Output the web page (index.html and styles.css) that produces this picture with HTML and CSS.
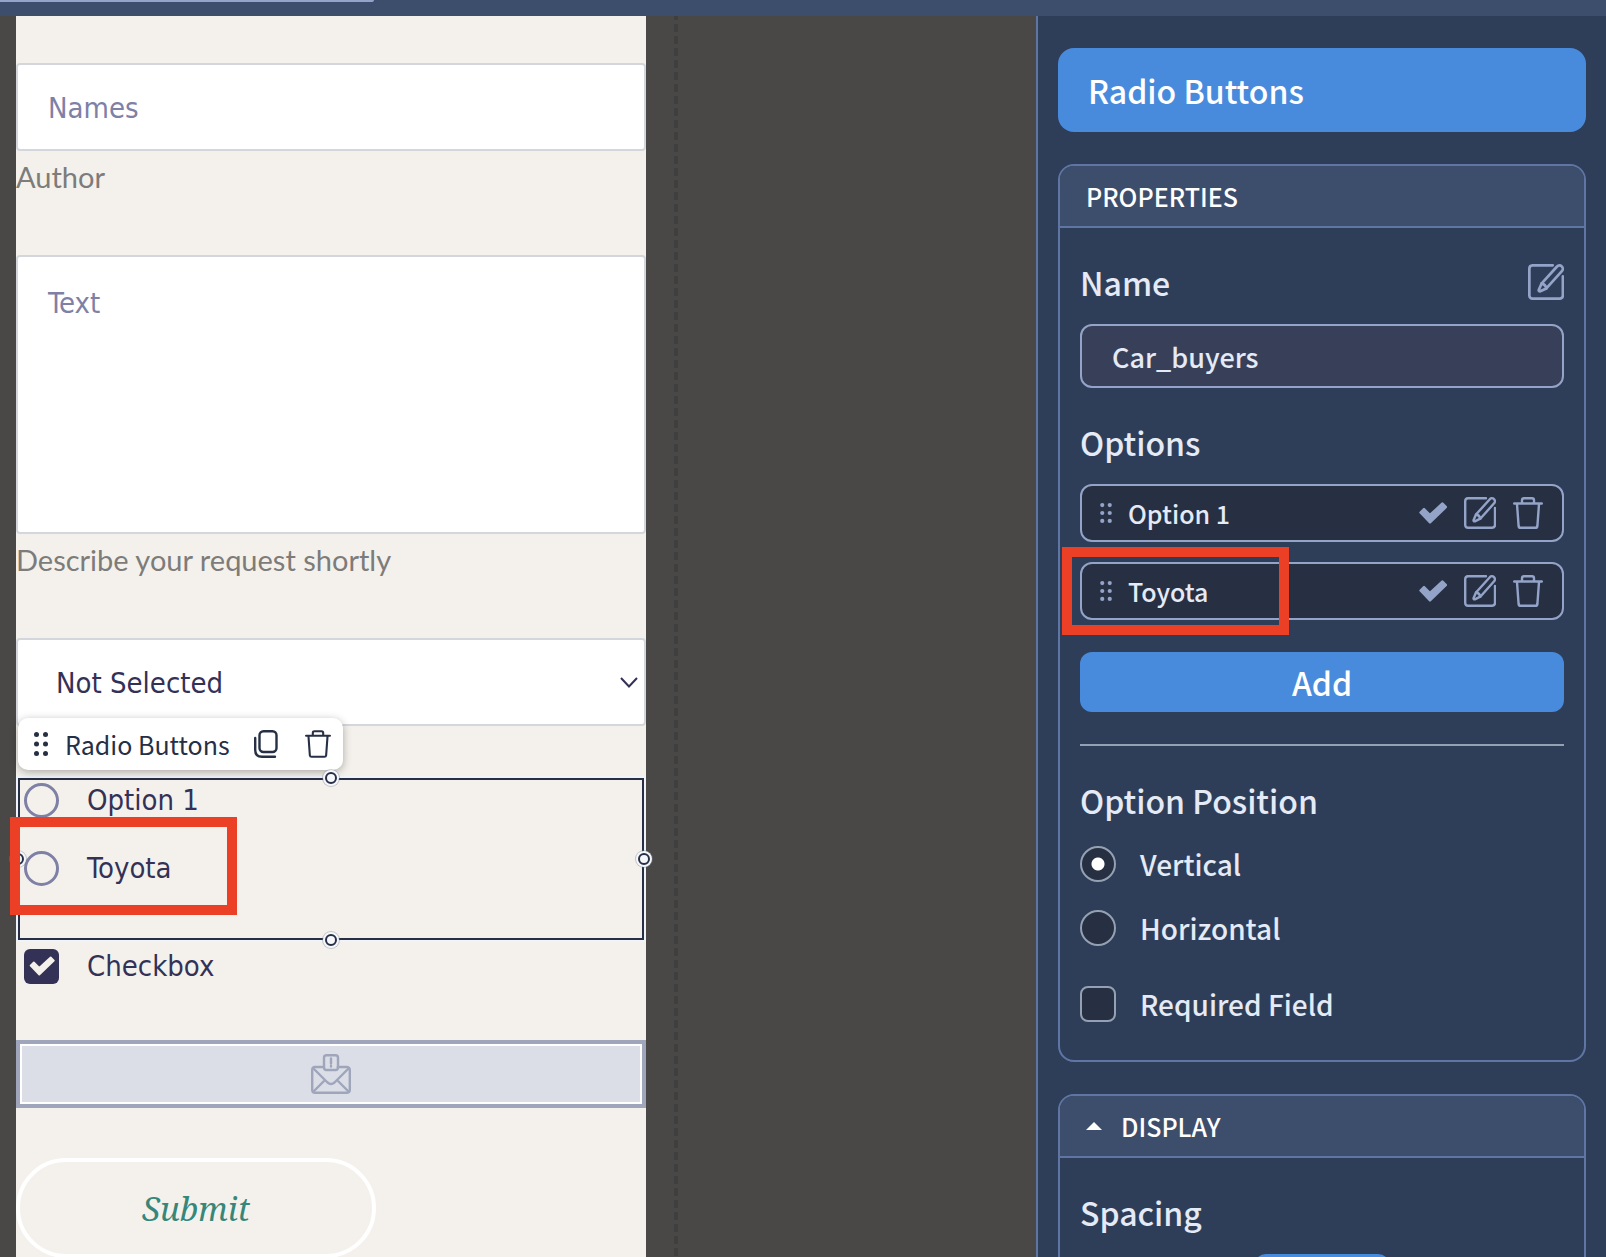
FILE: index.html
```html
<!DOCTYPE html>
<html lang="en">
<head>
    <meta charset="UTF-8">
    <meta name="viewport" content="width=device-width, initial-scale=1.0">
    <title>Form Editor</title>
    <link rel="stylesheet" href="styles.css">
</head>
<body>
    <!-- Shared icons -->
    <svg class="icon-defs" aria-hidden="true">
        <symbol id="icon-edit" viewBox="0 0 32 32">
            <path d="M22 1.200H4a3 3 0 0 0-2.800 3v23.800a3 3 0 0 0 3 2.800h24a3 3 0 0 0 2.800-3V11"/>
            <path d="M25.800 2.200a2.900 2.900 0 0 1 4.300 4.100L16.300 21.700l-5.400 2.600a1 1 0 0 1-1.300-1.300l2.400-5.500z"/>
            <path d="M12 17.500q3.500.5 4.300 4.200"/>
        </symbol>
        <symbol id="icon-trash" viewBox="0 0 30 32">
            <path d="M1.200 6.500h27.600M9 6V3.200q0-2 2-2h8q2 0 2 2V6M4 7l1.600 22q.2 1.800 2 1.800h14.800q1.800 0 2-1.800L26 7"/>
        </symbol>
        <symbol id="icon-check" viewBox="0 0 28 22">
            <path d="M1.500 10.500 5 7l6 6L23.500 1.500l3.500 3.500L11 20.500z" fill="currentColor"/>
        </symbol>
        <symbol id="icon-grip" viewBox="0 0 14 24">
            <g fill="currentColor" stroke="none">
                <circle cx="2.500" cy="2.500" r="2.500"/><circle cx="11.500" cy="2.500" r="2.500"/>
                <circle cx="2.500" cy="12" r="2.500"/><circle cx="11.500" cy="12" r="2.500"/>
                <circle cx="2.500" cy="21.500" r="2.500"/><circle cx="11.500" cy="21.500" r="2.500"/>
            </g>
        </symbol>
    </svg>

    <header class="topbar"><div class="tab"></div></header>

    <div class="editor">
        <main class="workspace">
            <form class="form">
                <input class="field" type="text" placeholder="Names" aria-label="Names" aria-describedby="names-help">
                <p class="help" id="names-help">Author</p>

                <textarea class="field message" placeholder="Text" aria-label="Text" aria-describedby="text-help"></textarea>
                <p class="help" id="text-help">Describe your request shortly</p>

                <div class="select-wrap">
                    <select class="field select" aria-label="Selection">
                        <option>Not Selected</option>
                    </select>
                    <svg class="chevron" viewBox="0 0 18 11" aria-hidden="true"><path d="M1 1l8 8.500L17 1"/></svg>
                </div>

                <!-- Selected block -->
                <div class="radio-group">
                    <div class="toolbar">
                        <svg class="icon grip-large"><use href="#icon-grip"/></svg>
                        <span class="toolbar-title">Radio Buttons</span>
                        <button type="button" class="icon-btn" aria-label="Duplicate">
                            <svg class="icon copy" viewBox="0 0 24 28"><rect x="5.500" y="1.200" width="17" height="20.800" rx="4"/><path d="M1.200 8v12q0 6.800 6.800 6.800h13"/></svg>
                        </button>
                        <button type="button" class="icon-btn" aria-label="Delete">
                            <svg class="icon bin"><use href="#icon-trash"/></svg>
                        </button>
                    </div>
                    <span class="handle handle-top"></span>
                    <span class="handle handle-right"></span>
                    <span class="handle handle-bottom"></span>
                    <span class="handle handle-left"></span>
                    <label class="choice"><input type="radio" name="car">Option 1</label>
                    <label class="choice marked"><input type="radio" name="car">Toyota</label>
                </div>

                <label class="choice choice-check">
                    <input type="checkbox" checked>
                    <svg class="tick"><use href="#icon-check"/></svg>
                    Checkbox
                </label>

                <div class="captcha">
                    <svg class="icon mail" viewBox="0 0 40 40" aria-hidden="true">
                        <rect x="13" y="1.200" width="14" height="14.800" rx="2.500"/>
                        <path d="M20 4.500v5M20 12v.5"/>
                        <path d="M13 13H4a3 3 0 0 0-2.800 3v20a3 3 0 0 0 3 2.800h31.800a3 3 0 0 0 2.800-3V16a3 3 0 0 0-3-3h-9"/>
                        <path d="M2 14l14.500 14.500q3.500 3 7 0L38 14M2 38l12-12M38 38 26 26"/>
                    </svg>
                </div>

                <button type="button" class="submit">Submit</button>
            </form>
            <div class="guide"></div>
        </main>

        <aside class="panel">
            <h1 class="panel-title">Radio Buttons</h1>

            <section class="card">
                <h2 class="card-head">PROPERTIES</h2>
                <div class="card-body">
                    <div class="row">
                        <label for="field-name">Name</label>
                        <button type="button" class="icon-btn" aria-label="Edit name"><svg class="icon edit-large"><use href="#icon-edit"/></svg></button>
                    </div>
                    <input class="name-input" id="field-name" type="text" value="Car_buyers">

                    <h3 class="row">Options</h3>
                    <ul class="options">
                        <li class="option">
                            <svg class="icon grip"><use href="#icon-grip"/></svg>
                            <span class="option-name">Option 1</span>
                            <button type="button" class="icon-btn" aria-label="Set default"><svg class="icon check"><use href="#icon-check"/></svg></button>
                            <button type="button" class="icon-btn" aria-label="Edit"><svg class="icon edit"><use href="#icon-edit"/></svg></button>
                            <button type="button" class="icon-btn" aria-label="Delete"><svg class="icon trash"><use href="#icon-trash"/></svg></button>
                        </li>
                        <li class="option marked">
                            <svg class="icon grip"><use href="#icon-grip"/></svg>
                            <span class="option-name">Toyota</span>
                            <button type="button" class="icon-btn" aria-label="Set default"><svg class="icon check"><use href="#icon-check"/></svg></button>
                            <button type="button" class="icon-btn" aria-label="Edit"><svg class="icon edit"><use href="#icon-edit"/></svg></button>
                            <button type="button" class="icon-btn" aria-label="Delete"><svg class="icon trash"><use href="#icon-trash"/></svg></button>
                        </li>
                    </ul>
                    <button type="button" class="add-btn">Add</button>
                    <hr class="divider">

                    <h3 class="row">Option Position</h3>
                    <div class="settings">
                        <label class="setting"><input type="radio" name="position" checked>Vertical</label>
                        <label class="setting"><input type="radio" name="position">Horizontal</label>
                        <label class="setting required"><input type="checkbox">Required Field</label>
                    </div>
                </div>
            </section>

            <section class="card">
                <h2 class="card-head"><span class="caret"></span>DISPLAY</h2>
                <div class="card-body">
                    <h3 class="row">Spacing</h3>
                    <button type="button" class="spacing-btn" aria-label="Spacing"></button>
                </div>
            </section>
        </aside>
    </div>
</body>
</html>
```
FILE: styles.css
```css
*, *::after {
    box-sizing: border-box;
}

body {
    margin: 0;
    height: 100vh;
    display: flex;
    flex-direction: column;
    overflow: hidden;
    font-family: "Noto Sans CJK SC", "Open Sans", sans-serif;
    background: #494846;
}

h1, h2, h3, p, ul {
    margin: 0;
    padding: 0;
    font-weight: inherit;
}

button, input, select, textarea {
    font: inherit;
    color: inherit;
    margin: 0;
}

.icon-defs {
    position: absolute;
    width: 0;
    height: 0;
}

.icon {
    display: block;
    flex: none;
    fill: none;
    stroke: currentColor;
    stroke-width: 2.4;
    stroke-linecap: round;
    stroke-linejoin: round;
}

.icon-btn {
    padding: 0;
    border: none;
    background: none;
    cursor: pointer;
}

.topbar {
    flex: none;
    height: 16px;
    background: #3d4d6c;
}

.tab {
    width: 374px;
    height: 2px;
    background: #94a4c8;
    border-radius: 0 0 8px 0;
}

.editor {
    flex: 1;
    display: flex;
    min-height: 0;
}

/* Workspace */
.workspace {
    flex: 1;
    display: flex;
    min-width: 0;
    padding-left: 16px;
}

.form {
    flex: 21;
    display: flex;
    flex-direction: column;
    padding-top: 47px;
    background: #f4f1ec;
    color: #343157;
    font-family: "DejaVu Sans Condensed", "DejaVu Sans", sans-serif;
    font-stretch: condensed;
    font-size: 29px;
}

/* Dashed page edge */
.guide {
    flex: 13;
    background: repeating-linear-gradient(#403f3f 0 4px, transparent 4px 8px, #403f3f 8px 12px) 28px 0 / 4px 100% no-repeat;
}

.field {
    display: block;
    flex: none;
    width: 100%;
    height: 88px;
    padding: 2px 30px 0;
    border: 2px solid #d3d7dc;
    border-radius: 4px;
    background: #fff;
    outline: none;
}

.field::placeholder {
    color: #7f80a6;
    opacity: 1;
}

.message {
    height: 279px;
    padding: 26px 30px;
    line-height: 40px;
    resize: none;
}

.help {
    margin: 8px 0 60px;
    font-family: Lato, sans-serif;
    font-size: 29px;
    line-height: 36px;
    color: #7d7c7a;
}

.select-wrap {
    display: grid;
    align-items: center;
}

.select-wrap > * {
    grid-area: 1 / 1;
}

.select {
    appearance: none;
    padding-left: 38px;
}

.chevron {
    justify-self: end;
    width: 18px;
    height: 11px;
    margin-right: 8px;
    fill: none;
    stroke: #343157;
    stroke-width: 2;
    pointer-events: none;
}

.radio-group {
    position: relative;
    display: flex;
    flex-direction: column;
    gap: 28px;
    margin: 52px 2px 0;
    padding: 0 4px 50px;
    border: 2px solid #262f45;
    box-shadow: 0 0 0 2px #f0f3f9;
}

.choice {
    display: flex;
    align-items: center;
    gap: 28px;
    height: 40px;
    line-height: 40px;
}

.choice input {
    appearance: none;
    flex: none;
    width: 35px;
    height: 35px;
    border: 3px solid #7f80a6;
    border-radius: 50%;
}

.choice-check {
    display: grid;
    grid-template-columns: 35px 1fr;
    margin: 6px 8px 0;
}

.choice-check input {
    grid-area: 1 / 1;
    border: none;
    border-radius: 6px;
    background: #343157;
}

.tick {
    grid-area: 1 / 1;
    justify-self: center;
    width: 26px;
    height: 20px;
    color: #f4f1ec;
    stroke: currentColor;
    stroke-width: 2;
    stroke-linejoin: round;
}

.toolbar {
    position: absolute;
    left: -2px;
    top: -62px;
    z-index: 1;
    display: flex;
    align-items: center;
    height: 52px;
    padding: 0 12px 0 15px;
    border-radius: 10px;
    background: #fff;
    box-shadow: 0 2px 8px rgba(0, 0, 0, 0.3);
    color: #262f45;
    font-family: "Noto Sans CJK SC", "Open Sans", sans-serif;
}

.toolbar-title {
    margin: 0 24px 0 16px;
    font-size: 25px;
    line-height: 36px;
    white-space: nowrap;
}

.grip-large {
    width: 16px;
    height: 24px;
}

.copy {
    width: 24px;
    height: 28px;
    margin-right: 27px;
}

.bin {
    width: 26px;
    height: 28px;
}

.handle {
    position: absolute;
    width: 12px;
    height: 12px;
    border: 2px solid #262f45;
    border-radius: 50%;
    background: #f6f7fa;
    box-shadow: 0 0 0 2px #f6f7fa, 0 0 0 3px rgba(120, 130, 150, 0.4);
    z-index: 1;
}

.handle-top,
.handle-bottom {
    left: calc(50% - 6px);
}

.handle-left,
.handle-right {
    top: calc(50% - 6px);
}

.handle-top {
    top: -8px;
}

.handle-right {
    right: -8px;
}

.handle-bottom {
    bottom: -8px;
}

.handle-left {
    left: -8px;
}

/* Red highlight frames */
.marked {
    position: relative;
}

.marked::after {
    content: "";
    position: absolute;
    z-index: 2;
    width: 227px;
    border: 10px solid #ec4026;
    pointer-events: none;
}

.choice.marked::after {
    left: -14px;
    top: -31px;
    height: 98px;
}

.option.marked::after {
    left: -20px;
    top: -17px;
    height: 88px;
}

.captcha {
    display: flex;
    flex: none;
    align-items: center;
    justify-content: center;
    height: 68px;
    margin-top: 54px;
    border: 4px solid #9fa6bb;
    background: #dbdee6;
    box-shadow: inset 0 0 0 2px #fff;
}

.mail {
    width: 40px;
    height: 40px;
    color: #9fa6bb;
}

.submit {
    flex: none;
    align-self: flex-start;
    width: 360px;
    height: 100px;
    margin-top: 50px;
    border: 4px solid #fff;
    border-radius: 50px;
    background: none;
    color: #36877a;
    font-family: "Noto Serif", "DejaVu Serif", "Liberation Serif", serif;
    font-style: italic;
    font-size: 33px;
    cursor: pointer;
}

/* Side panel */
.panel {
    flex: 0 0 570px;
    display: flex;
    flex-direction: column;
    gap: 32px;
    padding: 32px 20px;
    border-left: 2px solid #5f76a5;
    background: #2f3e58;
    color: #e4eaf6;
    font-weight: 500;
    overflow: hidden;
}

.panel-title {
    flex: none;
    padding: 22px 30px;
    border-radius: 16px;
    background: #488bdc;
    color: #fff;
    font-size: 32px;
    line-height: 40px;
}

.card {
    flex: none;
    border: 2px solid #5f76a5;
    border-radius: 16px;
    overflow: hidden;
}

.card-head {
    display: flex;
    align-items: center;
    height: 62px;
    padding: 0 26px;
    border-bottom: 2px solid #5f76a5;
    background: #3d4d6c;
    color: #fff;
    font-size: 25px;
    line-height: 36px;
}

.caret {
    margin-right: 19px;
    border: 8px solid transparent;
    border-top: none;
    border-bottom: 8px solid #fff;
}

.card-body {
    display: flex;
    flex-direction: column;
    padding: 36px 20px 38px;
}

.row {
    display: flex;
    align-items: center;
    justify-content: space-between;
    height: 36px;
    font-size: 32px;
    line-height: 36px;
}

.edit-large {
    width: 36px;
    height: 36px;
    color: #94a4c8;
}

.name-input {
    width: 100%;
    height: 64px;
    margin: 24px 0 36px;
    padding: 0 30px;
    border: 2px solid #94a4c8;
    border-radius: 12px;
    background: #384059;
    font-size: 27px;
    outline: none;
}

.options {
    display: flex;
    flex-direction: column;
    gap: 20px;
    margin-top: 24px;
    list-style: none;
}

.option {
    display: flex;
    align-items: center;
    height: 58px;
    padding: 0 19px 0 18px;
    border: 2px solid #94a4c8;
    border-radius: 12px;
    background: #272f42;
    color: #94a4c8;
    font-size: 25px;
    line-height: 36px;
}

.option-name {
    flex: 1;
    margin-left: 16px;
    color: #e4eaf6;
}

.option .icon-btn {
    margin-left: 17px;
}

.grip {
    width: 12px;
    height: 20px;
}

.check {
    width: 28px;
    height: 22px;
}

.edit {
    width: 32px;
    height: 32px;
}

.trash {
    width: 30px;
    height: 32px;
}

.add-btn {
    height: 60px;
    margin: 32px 0;
    padding: 0;
    border: none;
    border-radius: 12px;
    background: #488bdc;
    color: #fff;
    font-size: 32px;
    line-height: 40px;
    cursor: pointer;
}

.divider {
    width: 100%;
    height: 2px;
    margin: 0 0 36px;
    border: none;
    background: #94a1b2;
}

.settings {
    display: flex;
    flex-direction: column;
    gap: 28px;
    margin-top: 28px;
}

.setting {
    display: flex;
    align-items: center;
    gap: 24px;
    height: 36px;
    font-size: 28px;
    line-height: 36px;
}

.setting input {
    appearance: none;
    flex: none;
    width: 36px;
    height: 36px;
    border: 2px solid #94a1b2;
    border-radius: 50%;
    background: #272f42;
}

.setting input[type="radio"]:checked {
    background: radial-gradient(circle, #fff 6px, #272f42 7px);
}

.setting input[type="checkbox"] {
    border-radius: 8px;
}

.required {
    margin-top: 12px;
}

.spacing-btn {
    align-self: center;
    width: 136px;
    height: 48px;
    margin-top: 24px;
    border: none;
    border-radius: 12px;
    background: #488bdc;
}
```
